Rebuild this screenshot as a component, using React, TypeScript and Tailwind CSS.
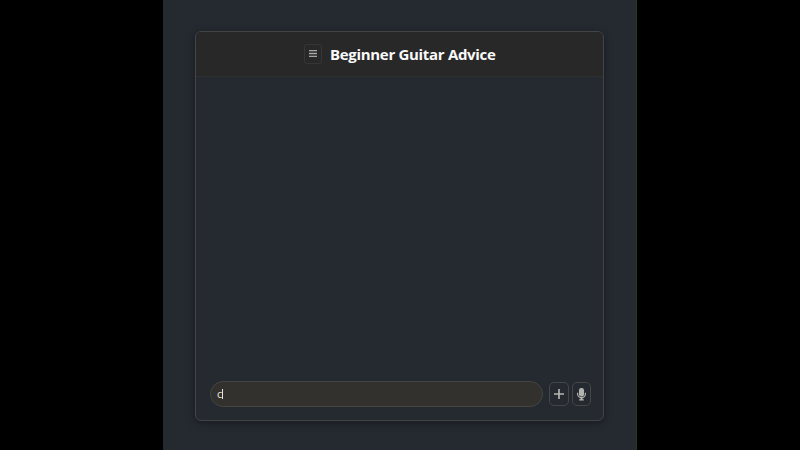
function MenuIcon() {
  return (
    <svg width="8" height="7" viewBox="0 0 8 7" className="text-[#a6a6a6]" stroke="currentColor" strokeWidth="1.3">
      <path d="M0 0.5h8M0 3.5h8M0 6.5h8" />
    </svg>
  );
}

function PlusIcon() {
  return (
    <svg width="10" height="10" viewBox="0 0 10 10" className="text-[#b4b4b0]" stroke="currentColor" strokeWidth="1.7">
      <path d="M5 0v10M0 5h10" />
    </svg>
  );
}

function MicIcon() {
  return (
    <svg width="9" height="13" viewBox="0 0 9 13" fill="none" className="text-[#b4b4b0]" stroke="currentColor">
      <rect x="2" y="0" width="5" height="8.5" rx="2.3" fill="currentColor" stroke="none" />
      <path d="M0.6 4.8v1.3a3.9 3.5 0 0 0 7.8 0V4.8M2.2 11.9h4.6" strokeWidth="1.2" />
      <path d="M4.5 9.3v2.6" strokeWidth="2" />
    </svg>
  );
}

export default function App() {
  return (
    <div className="flex h-[450px] w-[800px] justify-center overflow-hidden bg-black font-['Open_Sans','Noto_Sans',sans-serif]">
      <main className="w-[474px] shrink-0 border-r border-[#1f3b22] bg-[#252a31] pt-[31px] pl-8">
        <section className="flex h-[390px] w-[409px] flex-col overflow-hidden rounded-[6px] border border-[#434545] bg-[#252a30] shadow-[0_2px_8px_rgba(0,0,0,0.38)]">
          <header className="flex h-[45px] shrink-0 items-center border-b border-[#2f2f2f] bg-[#282828] pl-[108px]">
            <button aria-label="Menu" className="flex h-5 w-[18px] items-center justify-center rounded-[3px] border border-[#363636] pb-px">
              <MenuIcon />
            </button>
            <h1 className="ml-2 whitespace-nowrap text-[15px] leading-5 font-bold tracking-[-0.31px] text-[#fafafa]">
              Beginner Guitar Advice
            </h1>
          </header>
          <div className="flex-1" />
          <footer className="mb-[13px] flex h-[26px] shrink-0 items-center pl-3.5">
            <div className="flex h-[26px] w-[333px] items-center rounded-full border border-[#444541] bg-[#32312e] pl-1.5 text-[11px] leading-3 text-[#e4e4e0]">
              <span className="w-[5px]">c</span>
              <span className="h-[10px] w-px bg-[#e4e4e0]" />
            </div>
            <button aria-label="Add" className="ml-1.5 flex h-6 w-5 items-center justify-center rounded-[5px] border border-[#454747]">
              <PlusIcon />
            </button>
            <button aria-label="Voice input" className="ml-[3px] flex h-6 w-[19px] items-center justify-center rounded-[5px] border border-[#454747]">
              <MicIcon />
            </button>
          </footer>
        </section>
      </main>
    </div>
  );
}
